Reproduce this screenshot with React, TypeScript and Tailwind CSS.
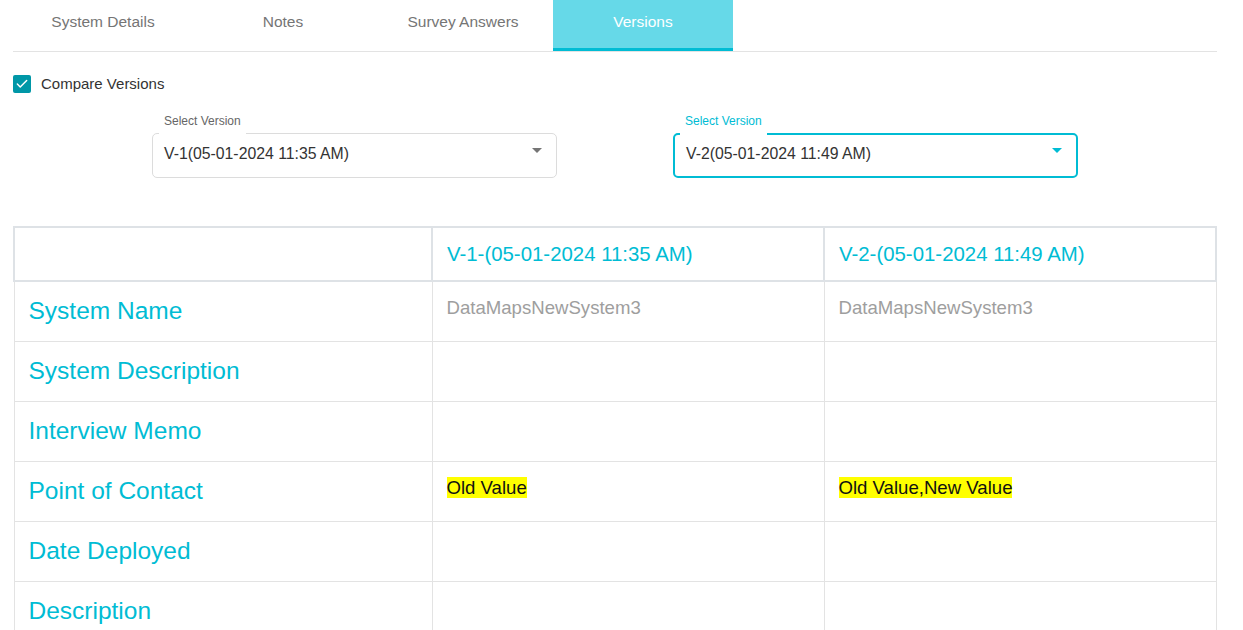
import { Check } from 'lucide-react'

const tabs = ['System Details', 'Notes', 'Survey Answers', 'Versions']

const rows = [
  { label: 'System Name', v1: 'DataMapsNewSystem3', v2: 'DataMapsNewSystem3' },
  { label: 'System Description', v1: '', v2: '' },
  { label: 'Interview Memo', v1: '', v2: '' },
  { label: 'Point of Contact', v1: 'Old Value', v2: 'Old Value,New Value', changed: true },
  { label: 'Date Deployed', v1: '', v2: '' },
  { label: 'Description', v1: '', v2: '' },
]

type SelectProps = {
  value: string
  focused?: boolean
}

const VersionSelect = ({ value, focused }: SelectProps) => {
  return (
    <div className="relative w-[405px] pt-[20px]">
      <span
        className={`absolute left-[7px] top-0 bg-white px-[5px] pt-[1px] pb-[7px] text-[12px] leading-[14px] ${
          focused ? 'text-[#00bcd4]' : 'text-[#666]'
        }`}
      >
        Select Version
      </span>
      <div
        className={`flex h-[45px] items-center justify-between rounded-[5px] pl-[11px] pr-[14px] pb-[3px] ${
          focused ? 'border-2 border-[#00bcd4]' : 'border border-[#dcdcdc]'
        }`}
      >
        <span className="text-[15.8px] text-[#333]">{value}</span>
        <span
          className={`mb-[8px] h-0 w-0 border-x-[5px] border-t-[5px] border-x-transparent ${
            focused ? 'border-t-[#00bcd4]' : 'border-t-[#757575]'
          }`}
        />
      </div>
    </div>
  )
}

export default function App() {
  return (
    <div className="min-h-screen bg-white px-[13px] font-['Liberation_Sans',Arial,sans-serif]">
      <div className="mr-[13px] flex border-b border-[#e3e3e3]">
        {tabs.map((tab) => (
          <div
            key={tab}
            className={`h-[51px] w-[180px] pt-[12px] text-center text-[15.5px] leading-[20px] ${
              tab === 'Versions'
                ? 'border-b-[3px] border-[#00bcd4] bg-[#66d9e8] text-white'
                : 'text-[#757575]'
            }`}
          >
            {tab}
          </div>
        ))}
      </div>

      <label className="mt-[23px] flex h-[18px] items-center gap-[10px]">
        <span className="flex h-[18px] w-[18px] items-center justify-center rounded-[2px] bg-[#0097a7]">
          <Check size={14} strokeWidth={2.5} className="text-white" />
        </span>
        <span className="text-[15px] text-[#333]">Compare Versions</span>
      </label>

      <div className="mr-[13px] mt-[20px] flex justify-center gap-[116px]">
        <VersionSelect value="V-1(05-01-2024 11:35 AM)" />
        <VersionSelect value="V-2(05-01-2024 11:49 AM)" focused />
      </div>

      <table className="mr-[13px] mt-[48px] w-[1204px] table-fixed border-collapse">
        <colgroup>
          <col className="w-[418px]" />
          <col className="w-[392px]" />
          <col className="w-[392px]" />
        </colgroup>
        <thead>
          <tr className="h-[54px]">
            <th className="border-2 border-[#dee2e6]" />
            <th className="border-2 border-[#dee2e6] px-[14px] text-left text-[20.4px] font-normal text-[#00bcd4]">
              V-1-(05-01-2024 11:35 AM)
            </th>
            <th className="border-2 border-[#dee2e6] px-[14px] text-left text-[20.4px] font-normal text-[#00bcd4]">
              V-2-(05-01-2024 11:49 AM)
            </th>
          </tr>
        </thead>
        <tbody>
          {rows.map((row) => (
            <tr key={row.label} className="h-[60px]">
              <td className="border border-[#e3e3e3] px-[14px] align-middle text-[24.5px] text-[#00bcd4]">
                {row.label}
              </td>
              {[row.v1, row.v2].map((v, i) => (
                <td
                  key={i}
                  className="border border-[#e3e3e3] px-[14px] pt-[14px] align-top text-[18.6px] leading-[24px]"
                >
                  {row.changed ? (
                    <span className="bg-[#ffff00] text-[#111]">{v}</span>
                  ) : (
                    <span className="text-[#9e9e9e]">{v}</span>
                  )}
                </td>
              ))}
            </tr>
          ))}
        </tbody>
      </table>
    </div>
  )
}
